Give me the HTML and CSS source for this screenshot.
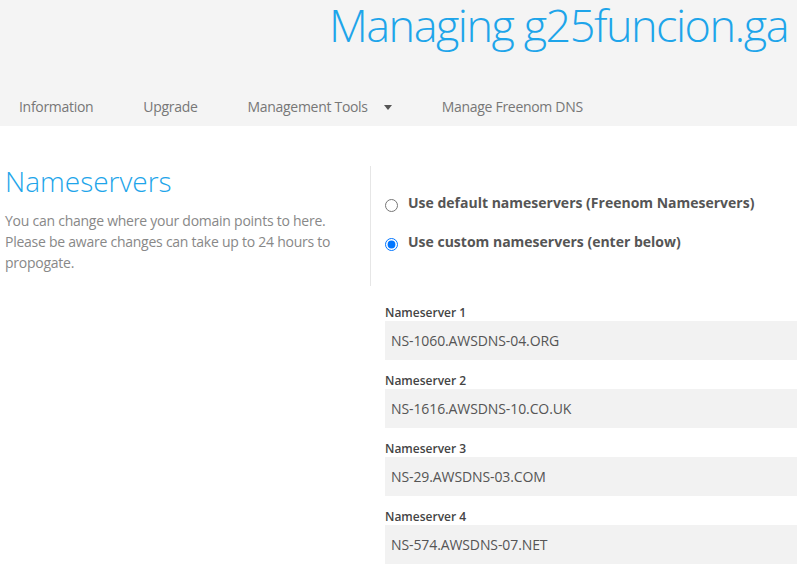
FILE: index.html
```html
<!DOCTYPE html>
<html lang="en">
<head>
<meta charset="utf-8">
<title>Managing g25funcion.ga</title>
<link rel="stylesheet" href="styles.css">
</head>
<body>
<header class="top">
  <h1 class="title">Managing g25funcion.ga</h1>
  <nav class="tabs">
    <span class="tab">Information</span>
    <span class="tab">Upgrade</span>
    <span class="tab">Management Tools<span class="caret"></span></span>
    <span class="tab">Manage Freenom DNS</span>
  </nav>
</header>
<main>
  <section class="intro-row">
    <div class="intro">
      <h2 class="heading">Nameservers</h2>
      <p class="desc">You can change where your domain points to here. Please be aware changes can take up to 24 hours to propogate.</p>
    </div>
    <div class="choices">
      <label class="choice"><input type="radio" name="ns"><span>Use default nameservers (Freenom Nameservers)</span></label>
      <label class="choice"><input type="radio" name="ns" checked><span>Use custom nameservers (enter below)</span></label>
    </div>
  </section>
  <section class="fields">
    <div class="field"><label class="flabel">Nameserver 1</label><input class="finput" type="text" value="NS-1060.AWSDNS-04.ORG"></div>
    <div class="field"><label class="flabel">Nameserver 2</label><input class="finput" type="text" value="NS-1616.AWSDNS-10.CO.UK"></div>
    <div class="field"><label class="flabel">Nameserver 3</label><input class="finput" type="text" value="NS-29.AWSDNS-03.COM"></div>
    <div class="field"><label class="flabel">Nameserver 4</label><input class="finput" type="text" value="NS-574.AWSDNS-07.NET"></div>
  </section>
</main>
</body>
</html>
```

FILE: styles.css
```css
html, body {
  margin: 0;
  padding: 0;
  background: #ffffff;
  overflow: hidden;
}
body {
  font-family: "Open Sans", "Liberation Sans", sans-serif;
  color: #555;
}
.top {
  background: #f4f4f4;
  height: 126px;
  box-sizing: border-box;
  padding-top: 2px;
}
.title {
  margin: 0;
  font-size: 45px;
  line-height: 45px;
  font-weight: 300;
  letter-spacing: -1.5px;
  color: #1ea5ea;
  text-align: right;
  padding-right: 9px;
  white-space: nowrap;
}
.tabs {
  display: flex;
  gap: 50px;
  padding: 50px 0 0 19px;
  font-size: 14px;
  line-height: 20px;
  letter-spacing: -0.3px;
  color: #777;
}
.tab {
  display: flex;
  align-items: center;
  white-space: nowrap;
}
.caret {
  display: inline-block;
  width: 0;
  height: 0;
  margin-left: 16px;
  margin-top: 1px;
  border-left: 4px solid transparent;
  border-right: 4px solid transparent;
  border-top: 5px solid #555;
}
.intro-row {
  display: flex;
  margin-top: 40px;
}
.intro {
  width: 365px;
  padding-left: 5px;
  flex: none;
}
.heading {
  margin: 0;
  font-size: 28px;
  line-height: 30px;
  font-weight: 300;
  color: #1ea5ea;
}
.desc {
  margin: 14px 0 0;
  width: 340px;
  font-size: 14px;
  line-height: 21px;
  letter-spacing: -0.25px;
  color: #888;
}
.choices {
  border-left: 1px solid #e6e6e6;
  padding: 26px 0 34px 14px;
  display: flex;
  flex-direction: column;
  gap: 18px;
}
.choice {
  display: flex;
  align-items: flex-start;
  font-size: 14px;
  line-height: 21px;
  font-weight: 700;
  color: #555;
  white-space: nowrap;
}
.choice input {
  margin: 7px 10px 0 0;
  width: 13px;
  height: 13px;
}
.fields {
  margin-left: 385px;
  padding-top: 18px;
  display: flex;
  flex-direction: column;
  gap: 12px;
}
.field {
  display: flex;
  flex-direction: column;
}
.flabel {
  font-size: 12px;
  line-height: 17px;
  font-weight: 600;
  color: #444;
}
.finput {
  box-sizing: border-box;
  height: 39px;
  width: 100%;
  border: none;
  outline: none;
  margin: 0;
  background: #f2f2f2;
  padding: 0 6px;
  font-family: "Open Sans", "Liberation Sans", sans-serif;
  font-size: 14px;
  letter-spacing: -0.1px;
  color: #555;
}
```
